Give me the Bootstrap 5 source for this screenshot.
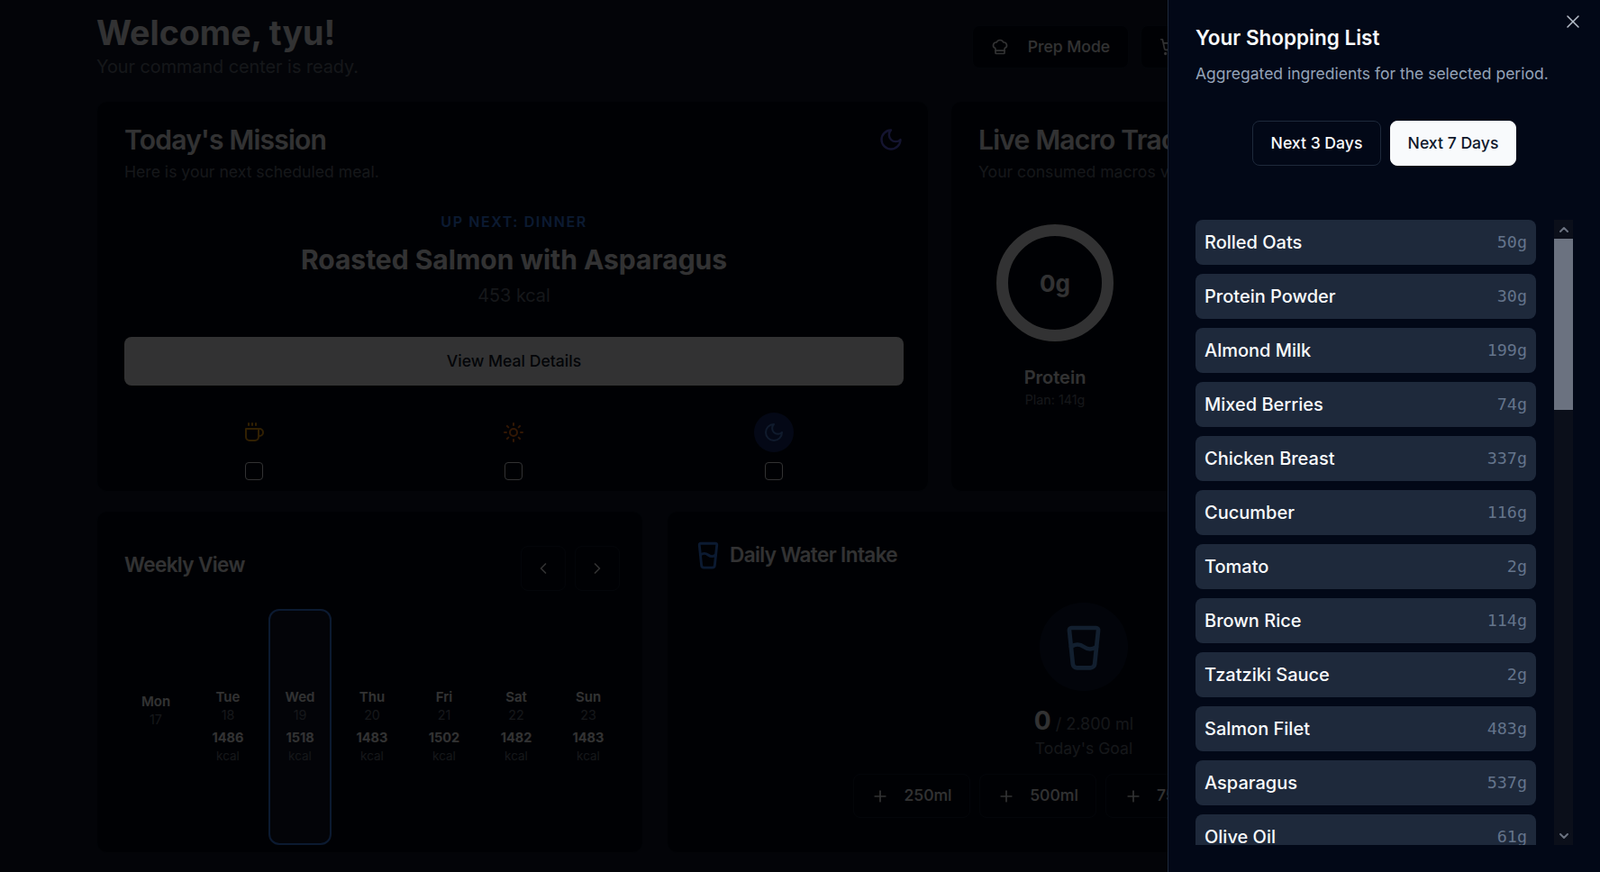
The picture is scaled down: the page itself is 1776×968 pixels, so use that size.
<!DOCTYPE html>
<html lang="en">
<head>
  <meta charset="UTF-8">
  <meta name="viewport" content="width=device-width, initial-scale=1">
  <title>Dashboard</title>
  <link href="https://cdn.jsdelivr.net/npm/bootstrap@5.3.3/dist/css/bootstrap.min.css" rel="stylesheet">
  <style>
    html, body { height: 100%; overflow: hidden; }
    body { background: #0f172a; color: #f8fafc; font-family: Inter, "Liberation Sans", sans-serif; }
    svg { fill: none; stroke: currentColor; stroke-width: 2; stroke-linecap: round; stroke-linejoin: round; flex: none; }

    .page-wrap { width: 1560px; margin-left: 107px; padding-top: 17px; }
    .page-title { font-size: 37.6px; line-height: 40px; font-weight: 700; margin: 0; }
    .page-sub { font-size: 19.8px; line-height: 30px; color: #6b7280; margin: 2px 0 0; }
    .head-btns { gap: 13px; margin-top: 11px; }
    .head-btn { height: 48px; padding: 0 20px; font-size: 17.6px; font-weight: 500; gap: 21px; white-space: nowrap; }
    .head-spare { width: 190px; }
    .dark-btn { background: #020817; border: 1px solid #131c30; color: #f8fafc; border-radius: 8px; display: inline-flex; align-items: center; justify-content: center; }

    .top-grid { display: grid; grid-template-columns: 924px 612px; gap: 24px; margin-top: 23px; }
    .low-grid { display: grid; grid-template-columns: 607px 927px; gap: 26px; margin-top: 21px; }
    .panel { background: #020817; border: 1px solid #0f172a; border-radius: 12px; padding: 24px 25px 0 30px; }
    .panel-title { font-size: 30px; line-height: 36px; font-weight: 600; letter-spacing: -.75px; margin: 0; }
    .panel-sub { font-size: 17.6px; line-height: 26px; color: #6b7280; margin: 5px 0 0; }
    .mission { height: 434px; padding-right: 27px; }
    .moon-ico { color: #6366f1; }
    .up-next { font-size: 16px; line-height: 24px; font-weight: 600; letter-spacing: 1.6px; color: #3b82f6; margin-top: 30px; }
    .meal-name { font-size: 30px; line-height: 36px; font-weight: 700; margin: 12px 0 0; }
    .meal-kcal { font-size: 19.8px; line-height: 28px; color: #6b7280; margin-top: 8px; }
    .details-btn { height: 54px; background: #f8fafc; border-radius: 8px; color: #0f172a; font-size: 17.6px; font-weight: 500; margin-top: 32px; }
    .meal-slots { display: grid; grid-template-columns: repeat(3, 1fr); margin-top: 30px; }
    .slot-ico { width: 44px; height: 44px; border-radius: 50%; }
    .slot-on { background: #16296e; color: #4f86e0; }
    .coffee-ico { color: #f59e0b; }
    .sun-ico { color: #f97316; }
    .tick-box { width: 20px; height: 20px; border: 1px solid #f8fafc; border-radius: 4px; margin-top: 11px; }

    .ring-col { width: 130px; margin: 45px 0 0 20px; text-align: center; }
    .ring-shape { width: 130px; height: 130px; border: 13px solid #f8fafc; border-radius: 50%; font-size: 26px; font-weight: 700; }
    .ring-name { font-size: 20px; line-height: 30px; font-weight: 600; margin-top: 25px; }
    .ring-plan { font-size: 14.3px; line-height: 20px; color: #6b7280; }

    .lower-panel { height: 380px; padding-top: 27px; }
    .small-title { font-size: 22.5px; line-height: 32px; font-weight: 600; letter-spacing: -.6px; margin: 0; }
    .week-top { padding-top: 15px; margin-top: -4px; }
    .week-title { margin-top: 5px; }
    .nav-btns { gap: 10px; }
    .nav-square { width: 50px; height: 50px; }
    .day-grid { display: grid; grid-template-columns: repeat(7, 1fr); gap: 10px; margin-top: 20px; height: 262px; }
    .day-cell { border: 2px solid transparent; border-radius: 12px; text-align: center; padding-bottom: 2px; }
    .day-active { border-color: #3b82f6; background: #0f172a; }
    .day-name { font-size: 15px; line-height: 20px; font-weight: 600; }
    .day-num { font-size: 14.3px; line-height: 20px; color: #6b7280; }
    .day-kcal { font-size: 14.5px; line-height: 20px; font-weight: 700; margin-top: 5px; }
    .day-unit { font-size: 13.5px; line-height: 20px; color: #6b7280; }
    .day-blank { height: 35px; }

    .water-panel { padding-right: 31px; }
    .water-ico { color: #3b82f6; }
    .water-head { gap: 7px; margin: 4px 0 0 -2px; height: 34px; }
    .water-round { width: 98px; height: 98px; border-radius: 50%; background: #0c1835; color: #5a9be8; margin-top: 36px; }
    .water-count { font-size: 18px; line-height: 32px; color: #6b7280; margin-top: 17px; }
    .water-count b { font-size: 28px; color: #f8fafc; }
    .water-goal { font-size: 17.6px; line-height: 26px; color: #6b7280; margin-top: -2px; }
    .add-row { gap: 10px; margin-top: 15px; }
    .add-btn { height: 49px; width: 130px; padding: 0; gap: 16px; font-size: 17.6px; font-weight: 500; }
    .add-btn-last { width: 92px; }

    .offcanvas-backdrop.show { opacity: .8; background: #000; }
    .shop-drawer.offcanvas { --bs-offcanvas-width: 480px; background: #020817; color: #f8fafc; border-left: 1px solid #1e293b; padding: 27px 30px 30px; }
    .close-x { position: absolute; top: 12px; right: 18px; color: #b8c0cc; background: none; border: 0; padding: 0; line-height: 0; }
    .close-x svg { stroke-width: 1.5; }
    .shop-title { font-size: 22.5px; line-height: 30px; font-weight: 600; margin: 0; }
    .shop-sub { font-size: 17.5px; line-height: 26px; color: #94a3b8; margin: 12px 0 0; }
    .range-row { gap: 10px; margin-top: 39px; }
    .range-btn { height: 50px; font-size: 17.6px; font-weight: 500; padding-top: 1px; }
    .range-off { width: 143px; border-color: #1e293b; }
    .range-on { width: 140px; background: #f8fafc; border-color: #f8fafc; color: #0f172a; }
    .shop-body { margin-top: 60px; height: 694px; gap: 20px; }
    .shop-list { width: 378px; overflow: hidden; gap: 10px; }
    .shop-item { flex: none; height: 50px; background: #1e293b; border-radius: 8px; padding: 0 10px; }
    .item-name { font-size: 20px; font-weight: 500; }
    .item-qty { font-family: "DejaVu Sans Mono", "Liberation Mono", monospace; font-size: 18.4px; color: #64748b; }
    .fake-bar { width: 21px; background: #0b0f1a; color: #6b7280; }
    .bar-arrow { height: 21px; }
    .bar-arrow svg { stroke-width: 3; }
    .bar-thumb { height: 190px; background: #6b7280; }
  </style>
</head>
<body>

  <div class="page-wrap">
    <div class="d-flex justify-content-between align-items-start">
      <div>
        <h1 class="page-title">Welcome, tyu!</h1>
        <p class="page-sub">Your command center is ready.</p>
      </div>
      <div class="d-flex head-btns">
        <button class="dark-btn head-btn" type="button">
          <svg width="20" height="20" viewBox="0 0 24 24"><path d="M17 21a1 1 0 0 0 1-1v-5.35c0-.457.316-.844.727-1.041a4 4 0 0 0-2.134-7.589 5 5 0 0 0-9.186 0 4 4 0 0 0-2.134 7.588c.411.198.727.585.727 1.041V20a1 1 0 0 0 1 1Z"/><path d="M6 17h12"/></svg>
          Prep Mode
        </button>
        <button class="dark-btn head-btn" type="button">
          <svg width="20" height="20" viewBox="0 0 24 24"><circle cx="8" cy="21" r="1"/><circle cx="19" cy="21" r="1"/><path d="M2.05 2.05h2l2.66 12.42a2 2 0 0 0 2 1.58h9.78a2 2 0 0 0 1.95-1.57l1.65-7.43H5.12"/></svg>
          Shopping List
        </button>
        <button class="dark-btn head-btn head-spare" type="button">Sign Out</button>
      </div>
    </div>

    <div class="top-grid">
      <div class="panel mission">
        <div class="d-flex justify-content-between">
          <div>
            <h2 class="panel-title">Today's Mission</h2>
            <p class="panel-sub">Here is your next scheduled meal.</p>
          </div>
          <svg class="moon-ico mt-1" width="28" height="28" viewBox="0 0 24 24"><path d="M12 3a6 6 0 0 0 9 9 9 9 0 1 1-9-9Z"/></svg>
        </div>
        <div class="text-center">
          <div class="up-next">UP NEXT: DINNER</div>
          <h3 class="meal-name">Roasted Salmon with Asparagus</h3>
          <div class="meal-kcal">453 kcal</div>
        </div>
        <div class="details-btn d-flex align-items-center justify-content-center">View Meal Details</div>
        <div class="meal-slots">
          <div class="d-flex flex-column align-items-center">
            <div class="slot-ico d-flex align-items-center justify-content-center coffee-ico">
              <svg width="24" height="24" viewBox="0 0 24 24"><path d="M17 8h1a4 4 0 1 1 0 8h-1"/><path d="M3 8h14v9a4 4 0 0 1-4 4H7a4 4 0 0 1-4-4Z"/><path d="M6 2v2"/><path d="M10 2v2"/><path d="M14 2v2"/></svg>
            </div>
            <div class="tick-box"></div>
          </div>
          <div class="d-flex flex-column align-items-center">
            <div class="slot-ico d-flex align-items-center justify-content-center sun-ico">
              <svg width="24" height="24" viewBox="0 0 24 24"><circle cx="12" cy="12" r="4"/><path d="M12 2v2"/><path d="M12 20v2"/><path d="m4.93 4.93 1.41 1.41"/><path d="m17.66 17.66 1.41 1.41"/><path d="M2 12h2"/><path d="M20 12h2"/><path d="m6.34 17.66-1.41 1.41"/><path d="m19.07 4.93-1.41 1.41"/></svg>
            </div>
            <div class="tick-box"></div>
          </div>
          <div class="d-flex flex-column align-items-center">
            <div class="slot-ico slot-on d-flex align-items-center justify-content-center">
              <svg width="24" height="24" viewBox="0 0 24 24"><path d="M12 3a6 6 0 0 0 9 9 9 9 0 1 1-9-9Z"/></svg>
            </div>
            <div class="tick-box"></div>
          </div>
        </div>
      </div>

      <div class="panel">
        <h2 class="panel-title text-nowrap">Live Macro Tracker</h2>
        <p class="panel-sub text-nowrap">Your consumed macros vs. plan.</p>
        <div class="ring-col">
          <div class="ring-shape d-flex align-items-center justify-content-center">0g</div>
          <div class="ring-name">Protein</div>
          <div class="ring-plan">Plan: 141g</div>
        </div>
      </div>
    </div>

    <div class="low-grid">
      <div class="panel lower-panel">
        <div class="d-flex justify-content-between align-items-start week-top">
          <h2 class="small-title week-title">Weekly View</h2>
          <div class="d-flex nav-btns">
            <button class="dark-btn nav-square" type="button"><svg width="20" height="20" viewBox="0 0 24 24"><path d="m15 18-6-6 6-6"/></svg></button>
            <button class="dark-btn nav-square" type="button"><svg width="20" height="20" viewBox="0 0 24 24"><path d="m9 18 6-6-6-6"/></svg></button>
          </div>
        </div>
        <div class="day-grid" id="dayGrid"></div>
      </div>

      <div class="panel lower-panel water-panel">
        <div class="d-flex align-items-center water-head">
          <svg class="water-ico" width="34" height="34" viewBox="0 0 24 24"><path d="M5.116 4.104A1 1 0 0 1 6.11 3h11.78a1 1 0 0 1 .994 1.105L17.19 20.21A2 2 0 0 1 15.2 22H8.8a2 2 0 0 1-2-1.79z"/><path d="M6 12a5 5 0 0 1 6 0 5 5 0 0 0 6 0"/></svg>
          <h2 class="small-title">Daily Water Intake</h2>
        </div>
        <div class="d-flex flex-column align-items-center">
          <div class="water-round d-flex align-items-center justify-content-center">
            <svg width="56" height="56" viewBox="0 0 24 24"><path d="M5.116 4.104A1 1 0 0 1 6.11 3h11.78a1 1 0 0 1 .994 1.105L17.19 20.21A2 2 0 0 1 15.2 22H8.8a2 2 0 0 1-2-1.79z"/><path d="M6 12a5 5 0 0 1 6 0 5 5 0 0 0 6 0"/></svg>
          </div>
          <div class="water-count"><b>0</b> / 2.800 ml</div>
          <div class="water-goal">Today's Goal</div>
          <div class="d-flex add-row">
            <button class="dark-btn add-btn" type="button"><svg width="20" height="20" viewBox="0 0 24 24"><path d="M5 12h14"/><path d="M12 5v14"/></svg>250ml</button>
            <button class="dark-btn add-btn" type="button"><svg width="20" height="20" viewBox="0 0 24 24"><path d="M5 12h14"/><path d="M12 5v14"/></svg>500ml</button>
            <button class="dark-btn add-btn" type="button"><svg width="20" height="20" viewBox="0 0 24 24"><path d="M5 12h14"/><path d="M12 5v14"/></svg>750ml</button>
            <button class="dark-btn add-btn add-btn-last" type="button"><svg width="20" height="20" viewBox="0 0 24 24"><path d="M5 12h14"/><path d="M12 5v14"/></svg>1L</button>
          </div>
        </div>
      </div>
    </div>
  </div>

  <div class="offcanvas-backdrop show"></div>

  <div class="offcanvas offcanvas-end show shop-drawer" tabindex="-1" data-bs-backdrop="false">
    <button class="close-x" type="button" data-bs-dismiss="offcanvas" aria-label="Close">
      <svg width="24" height="24" viewBox="0 0 24 24"><path d="M18 6 6 18"/><path d="m6 6 12 12"/></svg>
    </button>
    <h2 class="shop-title">Your Shopping List</h2>
    <p class="shop-sub">Aggregated ingredients for the selected period.</p>
    <div class="d-flex justify-content-center range-row">
      <button class="dark-btn range-btn range-off" type="button">Next 3 Days</button>
      <button class="dark-btn range-btn range-on" type="button">Next 7 Days</button>
    </div>
    <div class="d-flex shop-body">
      <div class="d-flex flex-column shop-list" id="shopList"></div>
      <div class="d-flex flex-column fake-bar">
        <div class="bar-arrow d-flex align-items-center justify-content-center">
          <svg width="16" height="16" viewBox="0 0 24 24"><path d="m18 15-6-6-6 6"/></svg>
        </div>
        <div class="bar-thumb"></div>
        <div class="flex-grow-1"></div>
        <div class="bar-arrow d-flex align-items-center justify-content-center">
          <svg width="16" height="16" viewBox="0 0 24 24"><path d="m6 9 6 6 6-6"/></svg>
        </div>
      </div>
    </div>
  </div>

  <script src="https://cdn.jsdelivr.net/npm/bootstrap@5.3.3/dist/js/bootstrap.bundle.min.js"></script>
  <script>
    const dias = [
      { nome: "Mon", num: 17 },
      { nome: "Tue", num: 18, kcal: 1486 },
      { nome: "Wed", num: 19, kcal: 1518, ativo: true },
      { nome: "Thu", num: 20, kcal: 1483 },
      { nome: "Fri", num: 21, kcal: 1502 },
      { nome: "Sat", num: 22, kcal: 1482 },
      { nome: "Sun", num: 23, kcal: 1483 }
    ];
    const itens = [
      ["Rolled Oats", "50g"], ["Protein Powder", "30g"], ["Almond Milk", "199g"],
      ["Mixed Berries", "74g"], ["Chicken Breast", "337g"], ["Cucumber", "116g"],
      ["Tomato", "2g"], ["Brown Rice", "114g"], ["Tzatziki Sauce", "2g"],
      ["Salmon Filet", "483g"], ["Asparagus", "537g"], ["Olive Oil", "61g"]
    ];

    document.getElementById("dayGrid").innerHTML = dias.map(d => `
      <div class="day-cell d-flex flex-column justify-content-center${d.ativo ? " day-active" : ""}">
        <div class="day-name">${d.nome}</div>
        <div class="day-num">${d.num}</div>
        ${d.kcal ? `<div class="day-kcal">${d.kcal}</div><div class="day-unit">kcal</div>` : `<div class="day-blank"></div>`}
      </div>`).join("");

    document.getElementById("shopList").innerHTML = itens.map(i => `
      <div class="shop-item d-flex justify-content-between align-items-center">
        <span class="item-name">${i[0]}</span>
        <span class="item-qty">${i[1]}</span>
      </div>`).join("");
  </script>
</body>
</html>
